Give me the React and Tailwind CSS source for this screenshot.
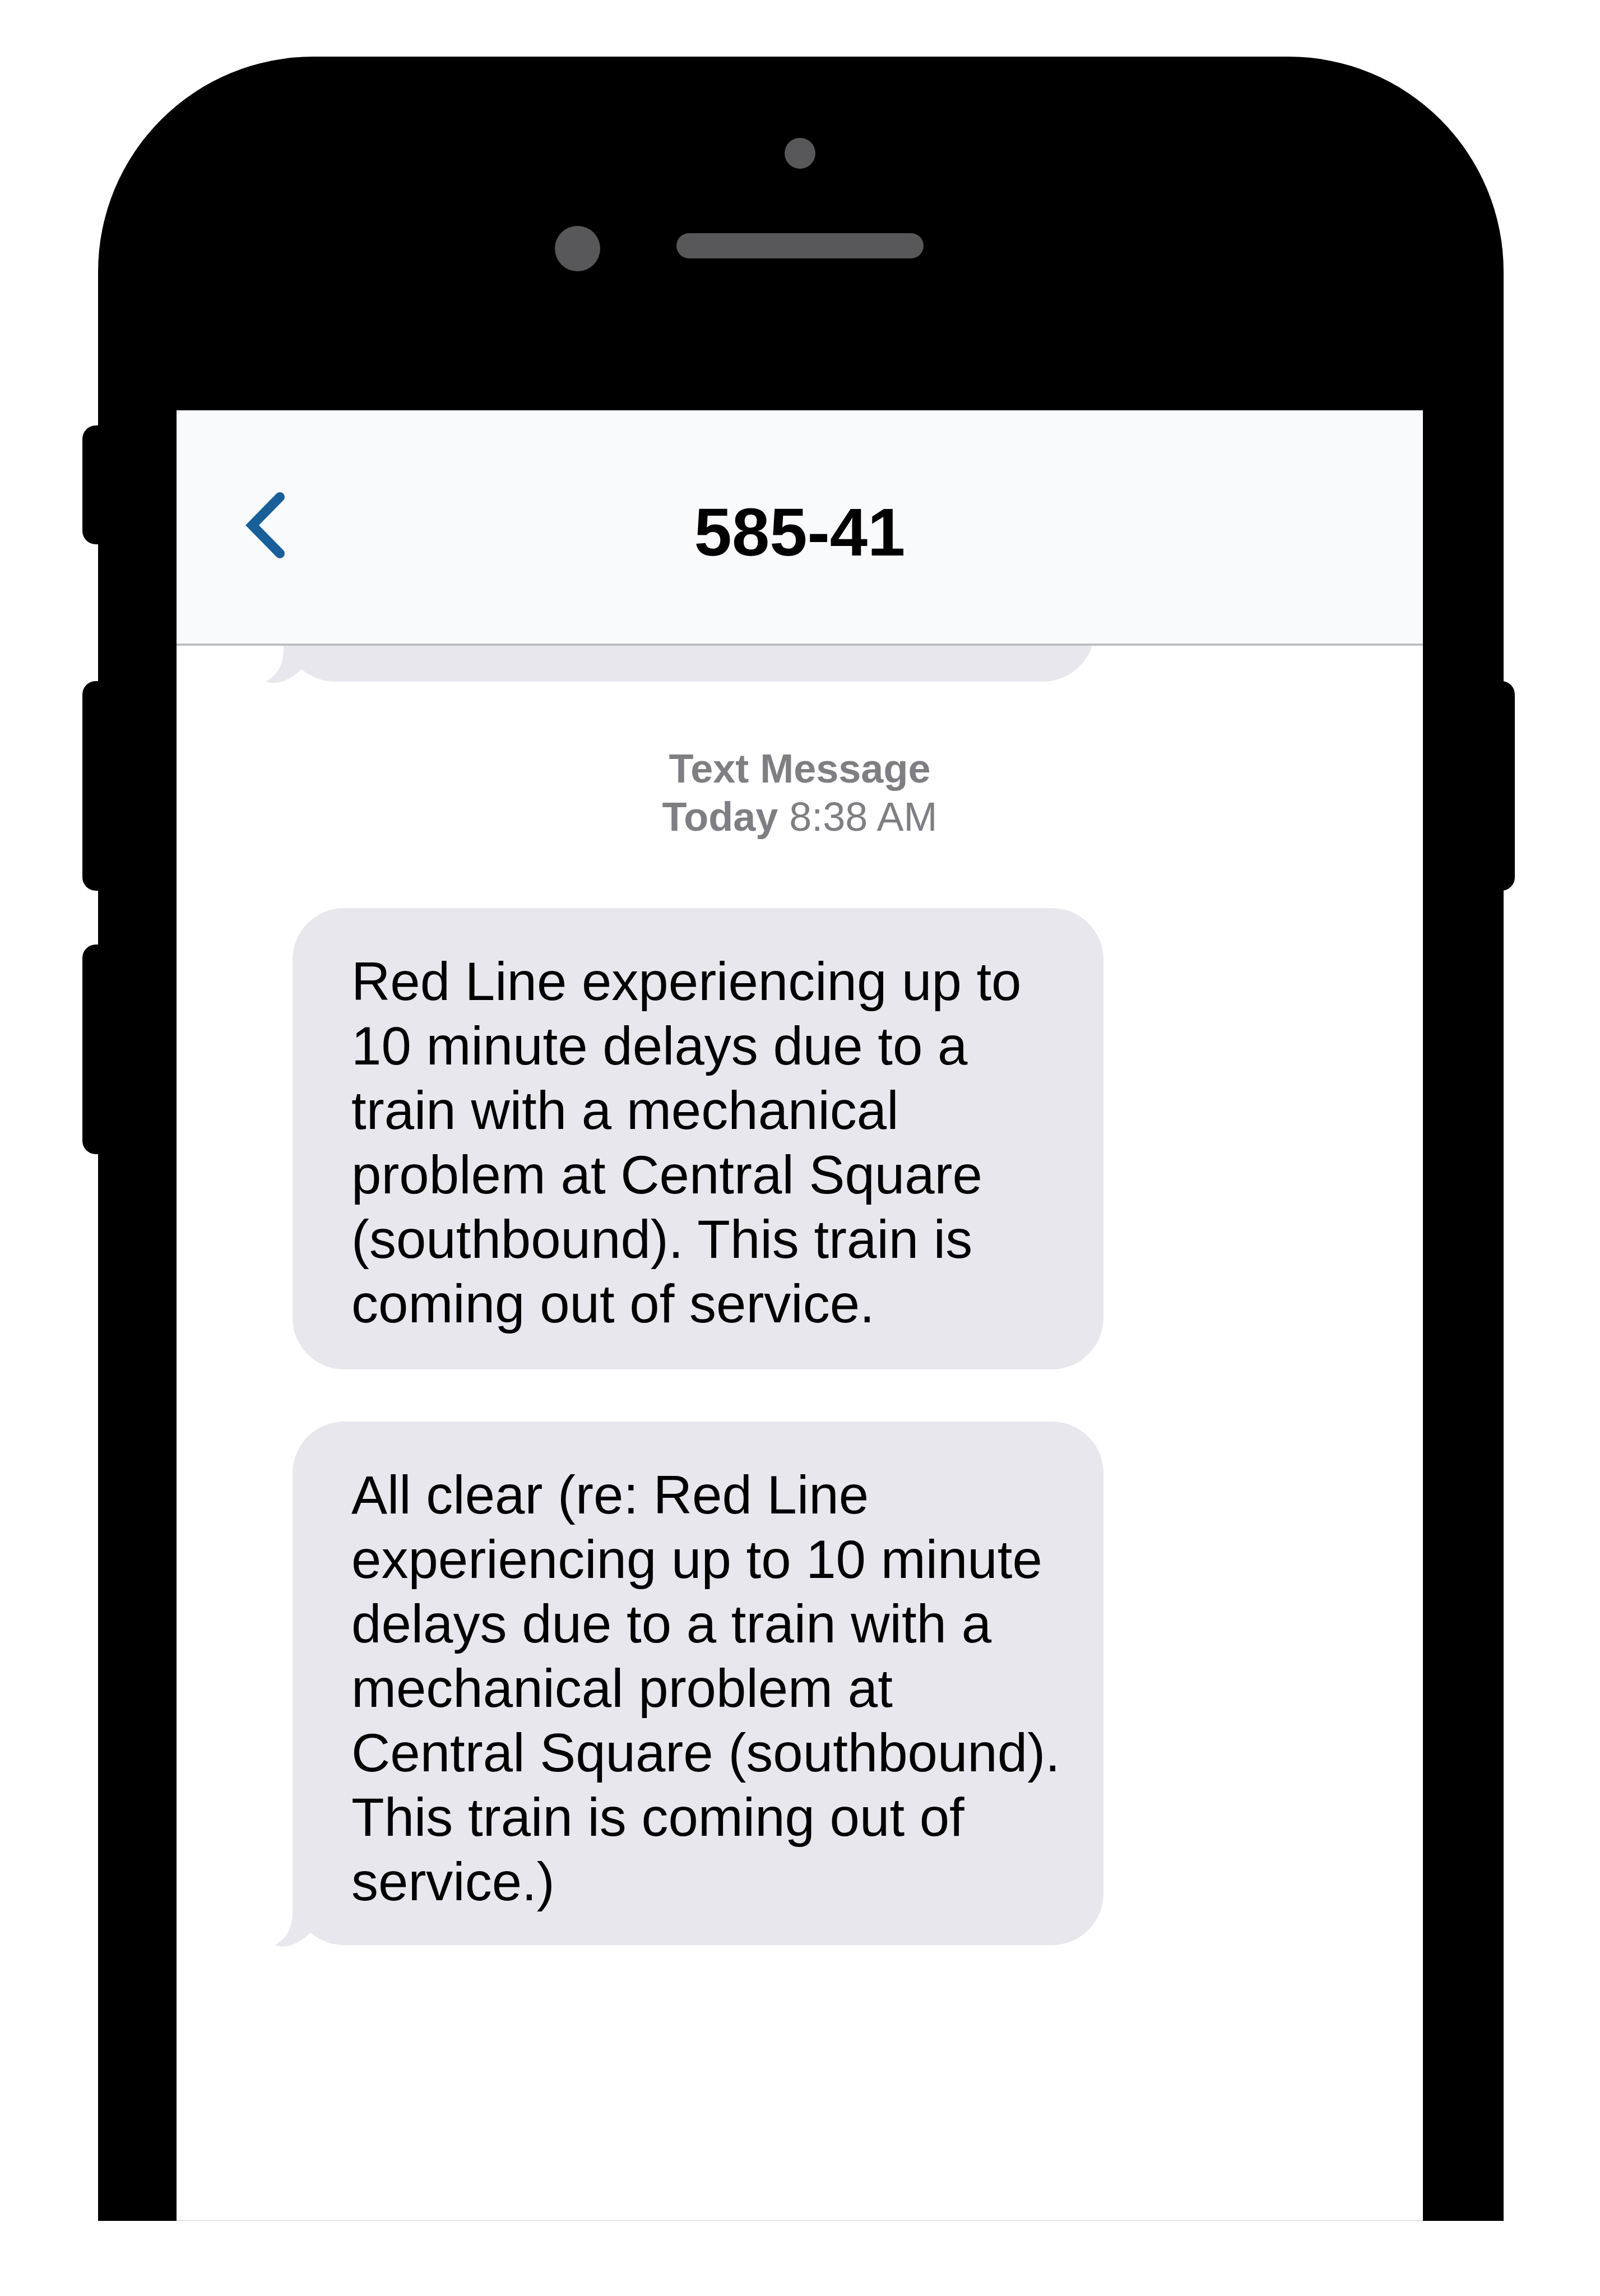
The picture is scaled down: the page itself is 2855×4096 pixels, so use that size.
function Tail() {
  return (
    <svg
      className="absolute -left-8 -bottom-1 h-[100px] w-20 text-[#e8e7ed]"
      viewBox="0 0 80 100"
      fill="currentColor"
      aria-hidden="true"
    >
      <path d="M32 0V38C32 66 20 86 0 96C22 103 45 93 65 73L80 60V0Z" />
    </svg>
  );
}

function Bubble({ children, tail = false, className = "" }) {
  return (
    <div
      className={`relative w-full max-w-[1447px] rounded-[92px] bg-[#e8e7ed] pl-[105px] pr-[60px] pt-[73px] text-[96px] leading-[115px] text-black ${className}`}
    >
      <p>{children}</p>
      {tail && <Tail />}
    </div>
  );
}

function SideKeys() {
  return (
    <>
      <div className="absolute -left-7 top-[658px] flex flex-col" aria-hidden="true">
        <div className="h-[212px] w-14 rounded-3xl bg-black" />
        <div className="mt-[244px] h-[374px] w-14 rounded-3xl bg-black" />
        <div className="mt-[96px] h-[374px] w-14 rounded-3xl bg-black" />
      </div>
      <div
        className="absolute -right-5 top-[1114px] h-[374px] w-14 rounded-3xl bg-black"
        aria-hidden="true"
      />
    </>
  );
}

function Bezel() {
  return (
    <div className="flex h-[631px] shrink-0 flex-col pt-[145px]" aria-hidden="true">
      <div className="size-[55px] self-center rounded-full bg-[#58585a]" />
      <div className="mt-[102px] grid grid-cols-[1fr_441px_1fr] items-start">
        <div className="mr-[136px] size-[81px] justify-self-end rounded-full bg-[#58585a]" />
        <div className="mt-[13px] h-[45px] rounded-full bg-[#58585a]" />
      </div>
    </div>
  );
}

function Header() {
  return (
    <header className="grid h-[420px] shrink-0 grid-cols-[1fr_auto_1fr] items-center border-b-4 border-[#bdbec0] bg-[#f9fafc] pb-[7px]">
      <button type="button" aria-label="Back" className="ml-[123px] justify-self-start">
        <svg
          className="h-[118px] w-[70px]"
          viewBox="0 0 70 118"
          fill="none"
          stroke="#185f9a"
          strokeWidth="17"
          strokeLinecap="round"
          strokeLinejoin="miter"
        >
          <path d="M61.5 8.5L12 59L61.5 109.5" />
        </svg>
      </button>
      <h1 className="pt-[25px] text-[121px] leading-none font-bold text-black">585-41</h1>
    </header>
  );
}

export default function App() {
  return (
    <div className='flex min-h-screen flex-col bg-white pt-[101px] pr-[172px] pb-[134px] pl-[175px] font-["Liberation_Sans",Arial,sans-serif]'>
      <div className="relative flex flex-1 flex-col rounded-t-[384px] bg-black pr-[144px] pl-[140px]">
        <SideKeys />
        <Bezel />
        <div className="flex flex-1 flex-col border-b border-[#cbcbcb] bg-white">
          <Header />
          <main className="flex flex-1 flex-col overflow-hidden pb-20 pl-[207px]">
            <Bubble tail className="-mt-[136px] -ml-4 h-[200px] shrink-0" />
            <p className="mt-28 -ml-[207px] text-center text-[72px] leading-[86px] text-[#7e7e83]">
              <strong>Text Message</strong>
              <br />
              <strong>Today</strong> 8:38 AM
            </p>
            <Bubble className="mt-[120px] pb-[60px]">
              Red Line experiencing up to 10 minute delays due to a train with a mechanical problem at
              Central Square (southbound). This train is coming out of service.
            </Bubble>
            <Bubble tail className="mt-[93px] pb-14">
              All clear (re: Red Line experiencing up to 10 minute delays due to a train with a
              mechanical problem at Central Square (southbound). This train is coming out of service.)
            </Bubble>
          </main>
        </div>
      </div>
    </div>
  );
}
